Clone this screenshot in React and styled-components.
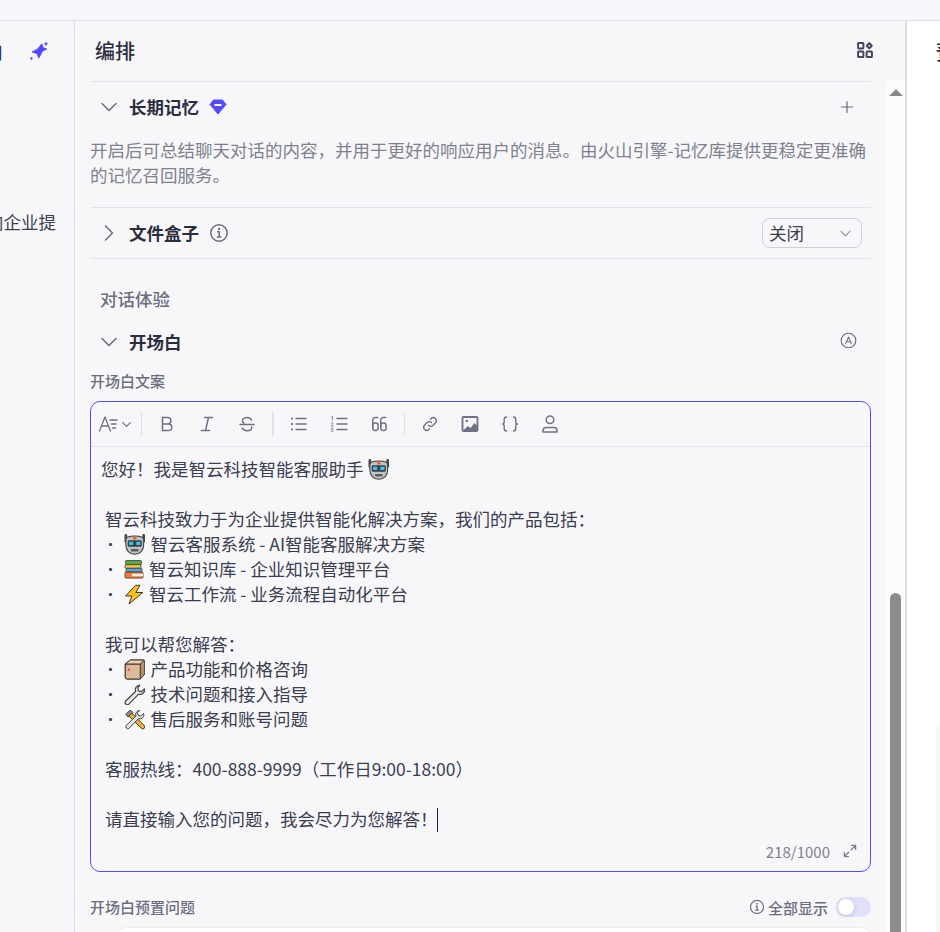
import React from "react"
import styled, { createGlobalStyle } from "styled-components"

const colors = {
  panel: "#f7f7fa",
  top: "#f7f7fc",
  line: "#e3e3ea",
  title: "#2b2d3c",
  body: "#3b3e4e",
  muted: "#7f818f",
  label: "#6c6e7e",
  icon: "#6a6c7c",
  tool: "#6f7287",
  accent: "#544bff",
}

const GlobalStyle = createGlobalStyle`
  html, body {
    margin: 0;
    padding: 0;
    background: #fff;
    font-family: "Noto Sans CJK SC", "Noto Sans", sans-serif;
  }
  * {
    box-sizing: border-box;
  }
`

const Page = styled.div`
  width: 940px;
  height: 932px;
  display: flex;
  flex-direction: column;
  overflow: hidden;
`

const TopBar = styled.div`
  height: 21px;
  flex: none;
  background: ${colors.top};
  border-bottom: 1px solid #dfdfe8;
`

const Columns = styled.div`
  flex: 1;
  min-height: 0;
  display: flex;
`

const LeftPanel = styled.aside`
  width: 75px;
  flex: none;
  background: ${colors.panel};
  border-right: 1px solid #dfdfe8;
  overflow: hidden;
  display: flex;
  flex-direction: column;
  align-items: flex-end;
`

const LeftHead = styled.div`
  height: 60px;
  padding-right: 25px;
  display: flex;
  align-items: center;
  gap: 26px;
  font-size: 17.5px;
  color: ${colors.title};
  white-space: nowrap;
`

const LeftText = styled.div`
  margin-top: 128px;
  padding-right: 18px;
  font-size: 17.5px;
  line-height: 25px;
  color: ${colors.body};
  white-space: nowrap;
`

const MiddlePanel = styled.main`
  width: 832px;
  flex: none;
  display: flex;
  flex-direction: column;
  background: ${colors.panel};
  border-right: 2px solid #dcdce2;
`

const PanelHead = styled.header`
  height: 60px;
  flex: none;
  padding: 0 32px 2px 20px;
  display: flex;
  align-items: center;
  justify-content: space-between;
`

const PanelTitle = styled.h2`
  margin: 0;
  font-size: 20px;
  font-weight: 500;
  color: ${colors.title};
`

const ScrollArea = styled.div`
  flex: 1;
  min-height: 0;
  display: flex;
`

const Content = styled.div`
  flex: 1;
  min-width: 0;
  overflow: hidden;
  padding: 0 15px;
`

const Scrollbar = styled.div`
  width: 19px;
  flex: none;
  background: #fcfcfd;
  display: flex;
  flex-direction: column;
  align-items: center;
`

const ScrollArrow = styled.div`
  margin-top: 8px;
  width: 0;
  height: 0;
  border-left: 7px solid transparent;
  border-right: 7px solid transparent;
  border-bottom: 7px solid #8a8a8a;
`

const ScrollThumb = styled.div`
  margin: auto 0 0 0;
  width: 11px;
  height: 339px;
  background: #8c8c8c;
  border-radius: 6px 6px 0 0;
`

const RightPanel = styled.aside`
  flex: 1;
  min-width: 0;
  background: #fff;
  position: relative;
  overflow: hidden;
  padding: 17px 0 0 29px;
  font-size: 20px;
  font-weight: 500;
  line-height: 28px;
  color: ${colors.title};
  white-space: nowrap;
`

const EdgeCard = styled.div`
  position: absolute;
  left: 29px;
  top: 700px;
  width: 40px;
  bottom: 0;
  background: #f8f8fa;
  border-radius: 8px 0 0 0;
`

const Section = styled.section`
  border-top: 1px solid ${colors.line};
  ${props => props.$last && `border-bottom: 1px solid ${colors.line};`}
`

const CollapseRow = styled.div`
  height: 50px;
  display: flex;
  align-items: center;
  padding: 0 14px 0 9px;
`

const Caret = styled.span`
  width: 20px;
  height: 20px;
  display: flex;
  align-items: center;
  justify-content: center;
  margin-right: 10px;
  color: ${colors.icon};
`

const RowTitle = styled.span`
  padding-bottom: 2px;
  font-size: 17.5px;
  font-weight: 600;
  line-height: 25px;
  color: ${colors.title};
`

const TitleBadge = styled.span`
  display: flex;
  margin-left: 10px;
  color: ${colors.icon};
`

const RowEnd = styled.span`
  margin-left: auto;
  display: flex;
  align-items: center;
  color: ${colors.icon};
`

const AutoSlot = styled.span`
  margin-bottom: 4px;
  display: flex;
`

const Description = styled.p`
  margin: 5px 0 20px;
  font-size: 17.5px;
  line-height: 25px;
  color: ${colors.muted};
`

const Select = styled.div`
  width: 100px;
  height: 30px;
  margin-right: -5px;
  padding: 0 9px 2px 6px;
  border: 1px solid #cfcfdc;
  border-radius: 8px;
  display: flex;
  align-items: center;
  justify-content: space-between;
  font-size: 17.5px;
  color: ${colors.body};
`

const SelectArrow = styled.span`
  display: flex;
  margin-top: 2px;
  color: #8a8c9a;
`

const GroupTitle = styled.div`
  margin: 27px 0 6px 10px;
  font-size: 17.5px;
  font-weight: 500;
  line-height: 25px;
  color: ${colors.label};
`

const FieldLabel = styled.div`
  font-size: 15px;
  font-weight: 500;
  line-height: 20px;
  color: ${colors.label};
`

const OpeningLabel = styled(FieldLabel)`
  margin-top: 4px;
`

const Editor = styled.div`
  height: 471px;
  margin-top: 10px;
  border: 1px solid ${colors.accent};
  border-radius: 10px;
  display: flex;
  flex-direction: column;
`

const Toolbar = styled.div`
  height: 45px;
  flex: none;
  padding-left: 7px;
  display: flex;
  align-items: center;
  border-bottom: 1px solid #e6e6ec;
  color: ${colors.tool};
`

const FontButton = styled.div`
  width: 34px;
  display: flex;
  align-items: center;
  justify-content: space-between;
`

const ToolButton = styled.div`
  width: 40px;
  display: flex;
  justify-content: center;
`

const ToolDivider = styled.div`
  width: ${props => (props.$thick ? 2 : 1)}px;
  height: 24px;
  margin: 0 5px 0 ${props => props.$left || 5}px;
  background: #e0e0e8;
`

const EditorBody = styled.div`
  flex: 1;
  padding: 9px 10px 0;
  font-size: 17.5px;
  line-height: 25px;
  color: ${colors.body};
`

const Line = styled.div`
  height: 25px;
  white-space: pre;
`

const Bullet = styled.span`
  display: inline-block;
  width: 19px;
  padding-left: 3px;
  font-family: "Noto Sans", sans-serif;
  font-weight: 700;
`

const EmojiSvg = styled.svg`
  display: inline-block;
  vertical-align: -4px;
  margin-right: 5px;
`

const TrailingEmoji = styled.span`
  margin-left: 1px;
`

const TextCaret = styled.span`
  display: inline-block;
  width: 1px;
  height: 24px;
  vertical-align: -6px;
  background: #23233f;
`

const EditorFooter = styled.div`
  height: 38px;
  flex: none;
  padding: 0 12px 2px 0;
  display: flex;
  align-items: center;
  justify-content: flex-end;
  gap: 12px;
  font-size: 15px;
  color: ${colors.muted};
`

const PresetRow = styled.div`
  margin-top: 25px;
  height: 20px;
  display: flex;
  align-items: center;
  justify-content: space-between;
`

const ShowAll = styled.div`
  display: flex;
  align-items: center;
  gap: 3px;
  font-size: 15px;
  font-weight: 500;
  color: ${colors.label};
`

const Toggle = styled.div`
  width: 35px;
  height: 20px;
  margin-left: 5px;
  padding: 2px;
  border-radius: 10px;
  background: #e0e1f8;
`

const ToggleKnob = styled.div`
  width: 16px;
  height: 16px;
  border-radius: 50%;
  background: #fff;
  box-shadow: 0 1px 4px rgba(70, 70, 120, 0.25);
`

const PresetCard = styled.div`
  height: 60px;
  margin: 10px 0 0 26px;
  background: #fff;
  border: 1px solid #eeeef2;
  border-radius: 10px;
`

const Svg = ({ size = 20, sw = 1.5, children, vb = 20 }) => (
  <svg
    width={size}
    height={size}
    viewBox={`0 0 ${vb} ${vb}`}
    fill="none"
    stroke="currentColor"
    strokeWidth={sw}
    strokeLinecap="round"
    strokeLinejoin="round"
  >
    {children}
  </svg>
)

const ChevronDown = ({ size, sw }) => (
  <Svg size={size} sw={sw}>
    <path d="M3 6.5l7 7 7-7" />
  </Svg>
)
const ChevronRight = () => (
  <Svg>
    <path d="M6.5 3l7 7-7 7" />
  </Svg>
)
const Plus = () => (
  <Svg sw={1.2}>
    <path d="M10 4.5v11M4.5 10h11" />
  </Svg>
)
const InfoIcon = ({ size = 20 }) => (
  <Svg size={size} sw={1.5}>
    <circle cx="10" cy="10" r="8.2" />
    <path d="M8.6 8.8h1.6v5M8.3 13.9h3.6" />
    <path d="M10 5.7v.6" strokeWidth="2" />
  </Svg>
)
const Sparkle = () => (
  <svg width="20" height="20" viewBox="0 0 20 20" fill="#5147ff" stroke="#5147ff" strokeWidth="0.8" strokeLinejoin="round">
    <path d="M12.800 2.800l1.300 3.900 3.700 1.300-4.300 2.200-3.700 7-1.800-4.700-5-1.500 5.700-3z" />
    <path d="M17 .6l.6 1.600 1.600.6-1.600.6-.6 1.600-.6-1.600-1.600-.6 1.600-.6zM2.500 15.800l.5 1.200 1.200.5-1.200.5-.5 1.200-.5-1.200-1.200-.5 1.200-.5z" strokeWidth="0.2" />
  </svg>
)
const Gem = () => (
  <svg width="18" height="16" viewBox="0 0 18 16">
    <path d="M4.500 1h9L17 5.500 9 15 1 5.500z" fill="#544bff" stroke="#544bff" strokeLinejoin="round" />
    <rect x="5.500" y="5" width="7" height="2" rx="0.6" fill="#fff" />
  </svg>
)
const Blocks = () => (
  <svg width="16" height="16" viewBox="0 0 18 18" fill="none" stroke="#44465a" strokeWidth="2.200">
    <rect x="1.200" y="1.200" width="6" height="6" rx="0.6" />
    <rect x="1.200" y="10.800" width="6" height="6" rx="0.6" />
    <rect x="10.800" y="10.800" width="6" height="6" rx="0.6" />
    <path d="M13.800 1.200l2.800 3-2.800 3-2.800-3z" strokeLinejoin="round" />
  </svg>
)
const AutoIcon = () => (
  <Svg size={17} sw={1.3}>
    <circle cx="10" cy="10" r="8.6" />
    <path d="M6.500 14l3.500-8 3.500 8M7.800 11.500h4.400" />
  </Svg>
)
const Expand = () => (
  <Svg size={16} sw={1.7}>
    <path d="M12 3h5v5M17 3l-5.500 5.500M8 17H3v-5M3 17l5.500-5.500" />
  </Svg>
)

const ToolIcons = {
  font: (
    <Svg size={22} sw={1.3} vb={22}>
      <path d="M1.500 18L7 4l5.500 14M3.500 13h7M12 7h7M13.500 11h4.500M14.500 15h3" />
    </Svg>
  ),
  bold: (
    <Svg sw={1.5}>
      <path d="M5.500 3.500h5.200a3.200 3.200 0 010 6.400H5.500zM5.500 9.900h6a3.300 3.300 0 010 6.600h-6z" />
    </Svg>
  ),
  italic: (
    <Svg sw={1.5}>
      <path d="M7.500 3.500h8M4.500 16.500h8M11.500 3.500l-3 13" />
    </Svg>
  ),
  strike: (
    <Svg sw={1.5}>
      <path d="M14.500 6c-.6-1.600-2.300-2.500-4.500-2.500-2.600 0-4.500 1.300-4.500 3.200 0 1 .5 1.800 1.300 2.300M3 10.500h14M14.600 13c.1.300.1.500.1.800 0 1.700-2 2.900-4.700 2.900-2.300 0-4.100-.9-4.700-2.600" />
    </Svg>
  ),
  list: (
    <Svg sw={1.4}>
      <path d="M7 4.500h10M7 10h10M7 15.500h10" />
      <path d="M2.800 4.500h.4M2.800 10h.4M2.800 15.500h.4" strokeWidth="1.800" />
    </Svg>
  ),
  ordered: (
    <Svg sw={1.4}>
      <path d="M8 4.500h10M8 10h10M8 15.500h10" />
      <path d="M2.500 3l1-.7v4M2 9.200c.5-.8 2.200-.6 2 .4-.1.700-1.500 1.300-2 2.400h2.200M2.200 14.300h2l-1 1.200c1 0 1.300 1.900-.2 1.900-.500 0-.9-.2-1-.5" strokeWidth="0.800" />
    </Svg>
  ),
  quote: (
    <Svg sw={1.5}>
      <path d="M8.800 3.500H6.500a2.800 2.800 0 00-2.800 2.800v7" />
      <rect x="3.700" y="9" width="5.400" height="7.500" rx="2.400" />
      <path d="M16.800 3.500h-2.300a2.800 2.800 0 00-2.800 2.800v7" />
      <rect x="11.700" y="9" width="5.400" height="7.500" rx="2.400" />
    </Svg>
  ),
  link: (
    <Svg sw={1.4}>
      <path d="M8.500 11.500a3 3 0 004.300 0l3-3a3.100 3.100 0 00-4.300-4.300l-1 1" />
      <path d="M11.500 8.500a3 3 0 00-4.300 0l-3 3a3.100 3.100 0 004.300 4.300l1-1" />
    </Svg>
  ),
  image: (
    <Svg sw={1.8}>
      <rect x="2.500" y="3" width="15" height="14" rx="1" />
      <circle cx="6.800" cy="7" r="1.300" fill="currentColor" stroke="none" />
      <path d="M3.500 16l4.500-4 2.500 2 4-5 2.500 2.500V16z" fill="currentColor" stroke="none" />
    </Svg>
  ),
  braces: (
    <Svg sw={1.4}>
      <path d="M6.500 3c-2 0-2.300 1-2.300 2.500v2.700c0 .9-.6 1.800-1.700 1.800 1.100 0 1.700.9 1.700 1.800v2.700c0 1.500.3 2.500 2.300 2.500M13.500 3c2 0 2.300 1 2.300 2.500v2.700c0 .9.600 1.800 1.700 1.800-1.100 0-1.700.9-1.700 1.800v2.700c0 1.500-.3 2.500-2.300 2.500" />
    </Svg>
  ),
  user: (
    <Svg sw={1.5}>
      <circle cx="10" cy="5.800" r="3.800" />
      <path d="M3 18v-1.500a3 3 0 013-3h8a3 3 0 013 3V18z" />
    </Svg>
  ),
}

const Robot = () => (
  <EmojiSvg width="21.500" height="21" viewBox="0 0 21 20">
    <path d="M1.800 1v6M19.200 1v6" stroke="#454545" strokeWidth="2.600" strokeLinecap="round" />
    <path d="M1.800 5c0-1.800 3-3.400 8.700-3.400S19.200 3.200 19.200 5v5.500c0 5-3.500 9-8.700 9s-8.700-4-8.700-9z" fill="#c2c2c2" stroke="#3c3c3c" />
    <rect x="9" y="2" width="3" height="3" fill="#e8603c" />
    <rect x="3.600" y="5.800" width="13.800" height="6.400" rx="1.400" fill="#36404a" />
    <rect x="5" y="7.300" width="4" height="3.200" fill="#39c6ee" />
    <rect x="12" y="7.300" width="4" height="3.200" fill="#39c6ee" />
    <rect x="6.800" y="14.400" width="7.400" height="2.500" rx="0.800" fill="#5c5c5c" />
  </EmojiSvg>
)
const Books = () => (
  <EmojiSvg width="20" height="21" viewBox="0 0 20 20">
    <rect x="1.500" y="1" width="16" height="4.200" rx="1" fill="#5aa84e" stroke="#33402f" strokeWidth="0.800" />
    <rect x="1" y="5.200" width="16" height="3.600" rx="1" fill="#f2c744" stroke="#433f2a" strokeWidth="0.800" />
    <rect x="2" y="8.800" width="16" height="3.800" rx="1" fill="#55a6dd" stroke="#2f3d48" strokeWidth="0.800" />
    <rect x="1" y="12.600" width="18" height="6" rx="1" fill="#ef7d38" stroke="#4a3020" strokeWidth="0.800" />
    <rect x="8" y="14.200" width="11" height="2.600" fill="#f4efe6" />
  </EmojiSvg>
)
const Bolt = () => (
  <EmojiSvg width="20" height="21" viewBox="0 0 20 20">
    <path d="M11.500 .8L1.500 11.500h6.300L5 19.500 18.800 8h-7L16 .8z" fill="#fcc21b" stroke="#3d3a30" strokeWidth="1" strokeLinejoin="round" />
  </EmojiSvg>
)
const Box = () => (
  <EmojiSvg width="21.500" height="21" viewBox="0 0 21 21">
    <path d="M1 5l5-4h12.500a2 2 0 012 2v12L16 20H3a2 2 0 01-2-2z" fill="#b98f67" stroke="#3f352c" />
    <path d="M16 5v15H3a2 2 0 01-2-2V5z" fill="#dcbb98" stroke="#3f352c" />
    <path d="M1 5l5-4h14l-4 4z" fill="#e9cfb2" stroke="#3f352c" strokeLinejoin="round" />
    <rect x="3.600" y="9.500" width="2" height="2.400" fill="#e8456a" />
  </EmojiSvg>
)
const Wrench = () => (
  <EmojiSvg width="21.500" height="21" viewBox="0 0 21 21">
    <path d="M15.500 1a4.500 4.500 0 00-4 6.200L1.500 17a2.200 2.200 0 003 3.200l9.900-10a4.500 4.500 0 005.800-5.300l-3 2.800-3-.8-.6-3 2-2.700z" fill="#e8e8e8" stroke="#444" strokeWidth="1.200" strokeLinejoin="round" />
  </EmojiSvg>
)
const Tools = () => (
  <EmojiSvg width="21.500" height="21" viewBox="0 0 21 21">
    <path d="M3 5.500l3-3 14 14.200a1.800 1.800 0 01-2.800 2.600z" fill="#f0b429" stroke="#3d3a30" />
    <path d="M15.500 1.500a4 4 0 00-3.800 5.600L2 16.500a2 2 0 002.800 2.800l9.600-9.700a4 4 0 005-5.200l-2.800 2.600-2.800-.7-.6-2.800z" fill="#e4e4e4" stroke="#444" strokeLinejoin="round" />
    <path d="M1.500 5.500L6 1l2.500 2.500L4 8z" fill="#8c8c8c" stroke="#3d3a30" strokeLinejoin="round" />
  </EmojiSvg>
)

const lines = [
  { text: "您好！我是智云科技智能客服助手 ", emoji: <Robot />, after: true },
  { text: "" },
  { text: " 智云科技致力于为企业提供智能化解决方案，我们的产品包括：" },
  { bullet: true, emoji: <Robot />, text: "智云客服系统 - AI智能客服解决方案" },
  { bullet: true, emoji: <Books />, text: "智云知识库 - 企业知识管理平台" },
  { bullet: true, emoji: <Bolt />, text: "智云工作流 - 业务流程自动化平台" },
  { text: "" },
  { text: " 我可以帮您解答：" },
  { bullet: true, emoji: <Box />, text: "产品功能和价格咨询" },
  { bullet: true, emoji: <Wrench />, text: "技术问题和接入指导" },
  { bullet: true, emoji: <Tools />, text: "售后服务和账号问题" },
  { text: "" },
  { text: " 客服热线：400-888-9999（工作日9:00-18:00）" },
  { text: "" },
  { text: " 请直接输入您的问题，我会尽力为您解答！", caret: true },
]

const toolGroups = [
  ["bold", "italic", "strike"],
  ["list", "ordered", "quote"],
  ["link", "image", "braces", "user"],
]

const App = () => {
  return (
    <Page>
      <GlobalStyle />
      <TopBar />
      <Columns>
        <LeftPanel>
          <LeftHead>
            调用
            <Sparkle />
          </LeftHead>
          <LeftText>致力于向企业提</LeftText>
        </LeftPanel>
        <MiddlePanel>
          <PanelHead>
            <PanelTitle>编排</PanelTitle>
            <Blocks />
          </PanelHead>
          <ScrollArea>
            <Content>
              <Section>
                <CollapseRow>
                  <Caret>
                    <ChevronDown />
                  </Caret>
                  <RowTitle>长期记忆</RowTitle>
                  <TitleBadge>
                    <Gem />
                  </TitleBadge>
                  <RowEnd>
                    <Plus />
                  </RowEnd>
                </CollapseRow>
                <Description>
                  开启后可总结聊天对话的内容，并用于更好的响应用户的消息。由火山引擎-记忆库提供更稳定更准确的记忆召回服务。
                </Description>
              </Section>
              <Section $last>
                <CollapseRow>
                  <Caret>
                    <ChevronRight />
                  </Caret>
                  <RowTitle>文件盒子</RowTitle>
                  <TitleBadge>
                    <InfoIcon />
                  </TitleBadge>
                  <RowEnd>
                    <Select>
                      关闭
                      <SelectArrow>
                        <ChevronDown size={13} sw={1.6} />
                      </SelectArrow>
                    </Select>
                  </RowEnd>
                </CollapseRow>
              </Section>
              <GroupTitle>对话体验</GroupTitle>
              <CollapseRow>
                <Caret>
                  <ChevronDown />
                </Caret>
                <RowTitle>开场白</RowTitle>
                <RowEnd>
                  <AutoSlot>
                    <AutoIcon />
                  </AutoSlot>
                </RowEnd>
              </CollapseRow>
              <OpeningLabel>开场白文案</OpeningLabel>
              <Editor>
                <Toolbar>
                  <FontButton>
                    {ToolIcons.font}
                    <ChevronDown size={11} sw={2.2} />
                  </FontButton>
                  <ToolDivider $left={9} />
                  {toolGroups.map((group, i) => (
                    <React.Fragment key={group[0]}>
                      {group.map(name => (
                        <ToolButton key={name}>{ToolIcons[name]}</ToolButton>
                      ))}
                      {i < 2 && <ToolDivider $thick={i === 0} />}
                    </React.Fragment>
                  ))}
                </Toolbar>
                <EditorBody>
                  {lines.map((line, i) => (
                    <Line key={i}>
                      {line.bullet && (
                        <>
                          {" "}
                          <Bullet>·</Bullet>
                        </>
                      )}
                      {line.bullet && line.emoji}
                      {line.text}
                      {line.after && <TrailingEmoji>{line.emoji}</TrailingEmoji>}
                      {line.caret && <TextCaret />}
                    </Line>
                  ))}
                </EditorBody>
                <EditorFooter>
                  218/1000
                  <Expand />
                </EditorFooter>
              </Editor>
              <PresetRow>
                <FieldLabel>开场白预置问题</FieldLabel>
                <ShowAll>
                  <InfoIcon size={16} />
                  全部显示
                  <Toggle>
                    <ToggleKnob />
                  </Toggle>
                </ShowAll>
              </PresetRow>
              <PresetCard />
            </Content>
            <Scrollbar>
              <ScrollArrow />
              <ScrollThumb />
            </Scrollbar>
          </ScrollArea>
        </MiddlePanel>
        <RightPanel>
          预览与调试
          <EdgeCard />
        </RightPanel>
      </Columns>
    </Page>
  )
}

export default App
